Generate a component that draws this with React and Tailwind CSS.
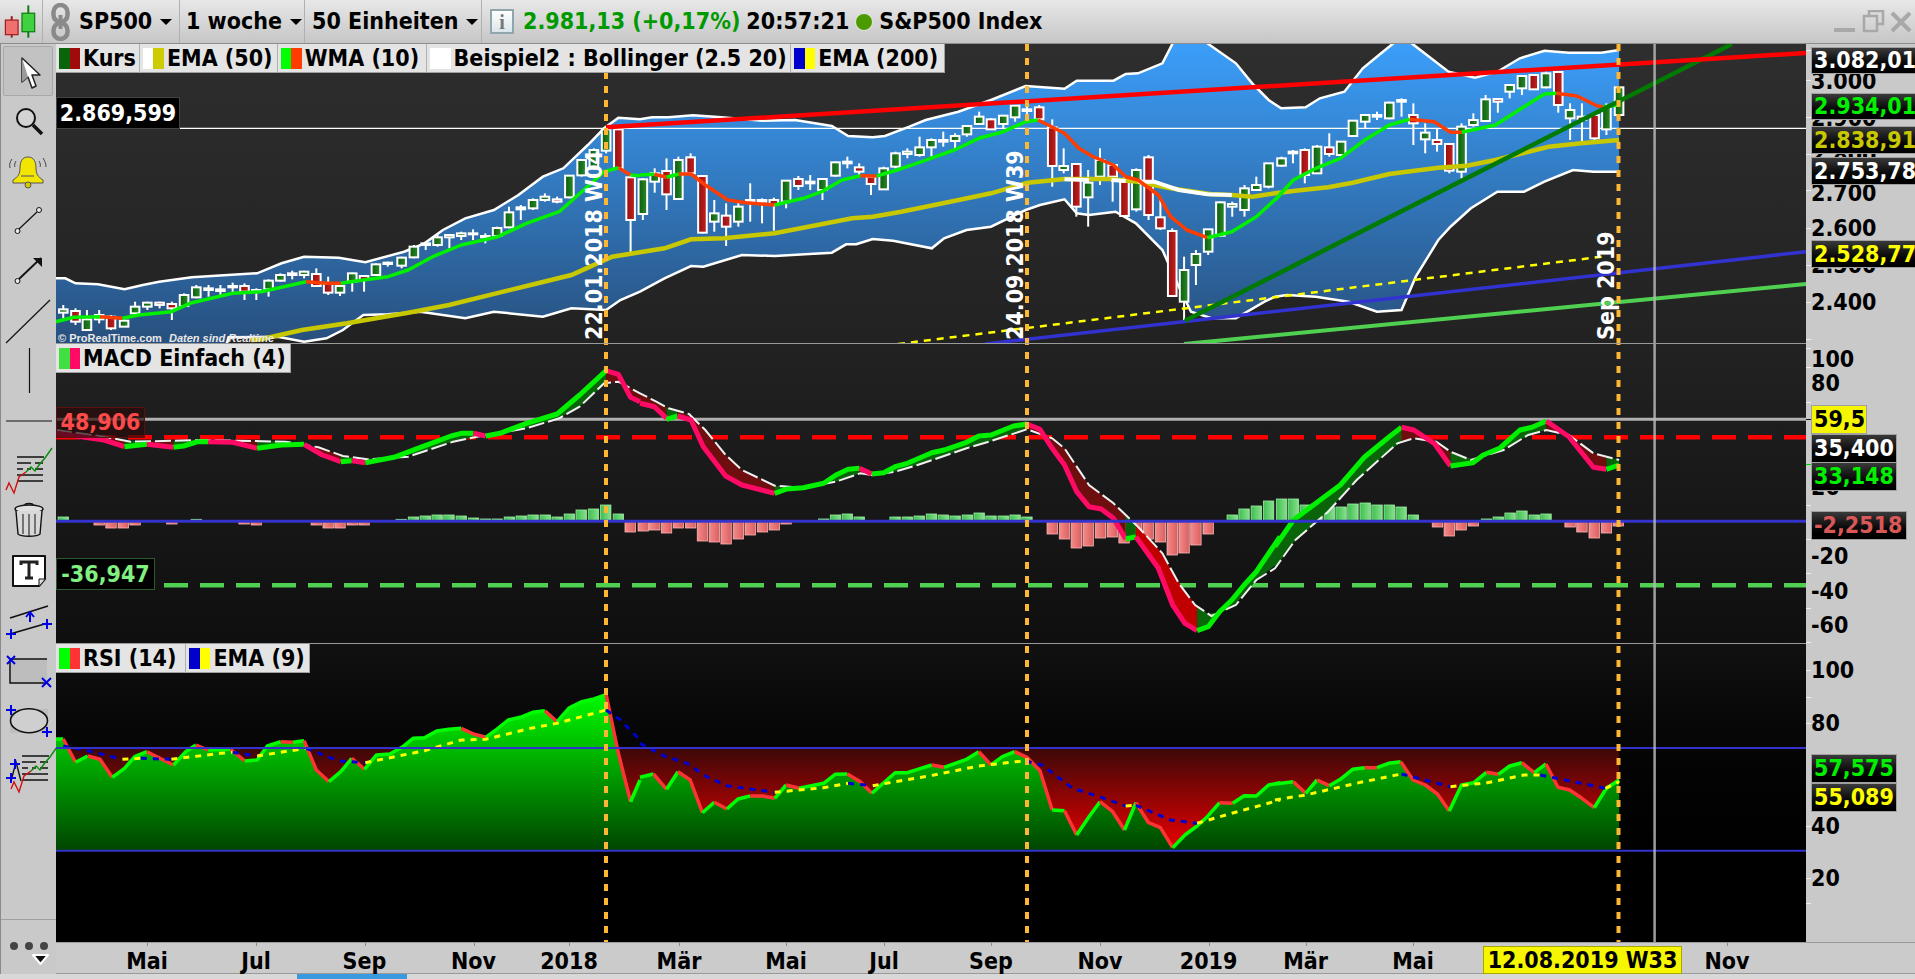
// Weekly S&P500 chart window: price panel, MACD panel, RSI panel, time axis.
// Chart data was read off zoom crops, so it is stored as crop coordinates and
// converted with Z(): crop x is scaled 2.45, crop y is scaled 3.

const Z = (x0, y0, a) => {
  const out = [];
  for (let i = 0; i < a.length; i += 2) out.push([x0 + a[i] / 2.45, y0 + a[i + 1] / 3]);
  return out;
};
const str = (pts) => pts.map((p) => p[0].toFixed(1) + "," + p[1].toFixed(1)).join(" ");

const X = [0, 640, 1275];

const upper = [
  ...Z(X[0], 0, [137,835,160,835,185,850,240,853,305,868,350,855,390,845,470,832,630,820,690,790,745,770,830,773,895,787,990,755,1040,730,1085,690,1140,655,1210,630,1270,585,1330,530,1380,505,1440,435,1480,385,1515,353]),
  ...Z(X[1], 0, [0,358,30,352,70,352,130,346,200,352,300,362,380,360,470,378,510,408,570,412,600,408,660,380,700,360,780,335,860,300,945,258,1040,266,1070,242,1160,242,1190,222,1220,220,1280,190,1305,130,1310,110,1385,110,1390,130,1460,190,1500,250,1540,300]),
  ...Z(X[2], 0, [15,325,75,322,110,295,170,275,215,205,260,160,290,130,300,110,325,110,335,130,425,215,490,233,545,215,600,175,660,152,720,158,800,158,843,150]),
];
const lower = [
  ...Z(X[0], 0, [137,1100,540,1100,560,1012,680,1010,745,1025,800,1015,840,990,890,945,950,943,1030,935,1140,955,1210,935,1330,950,1400,925,1485,930,1520,900]),
  ...Z(X[1], 0, [0,875,60,835,125,798,155,800,250,765,330,768,470,758,505,733,530,733,570,717,620,722,715,745,745,715,800,690,860,680,945,630,980,615,1040,598,1070,640,1100,645,1165,635,1215,670,1280,750,1320,860,1350,935,1400,955,1460,955,1530,905]),
  ...Z(X[2], 0, [0,890,30,885,100,890,180,905,250,935,310,930,345,830,400,720,430,680,480,625,545,575,610,575,660,545,730,510,780,515,843,515]),
];
const ema50 = [
  ...Z(X[0], 0, [615,1020,640,1018,740,990,850,970,1000,938,1100,915,1300,855,1400,825,1500,770]),
  ...Z(X[1], 0, [0,757,60,745,125,718,205,715,330,700,520,655,570,650,640,635,760,605,860,580,950,548,1040,537,1155,537,1220,545,1300,565,1400,583,1450,585,1500,590]),
  ...Z(X[2], 0, [0,580,50,572,130,562,190,548,280,522,400,503,470,497,540,480,670,440,750,430,843,420]),
];
const midBand = [
  Z(X[1], 0, [1040,538,1100,540]),
  Z(X[1], 0, [1155,540,1190,543]),
  Z(X[1], 0, [1220,545,1260,545,1320,570,1390,583,1450,585]),
];

const wma = [
  [0,"g",137,965,180,952,245,950],[0,"r",245,950,300,955],[0,"g",300,955,340,945,420,935,470,908,570,880,640,875,750,845],[0,"r",750,845,800,850,835,850],
  [0,"g",835,850,890,840,950,830,1000,810,1060,770,1130,735,1220,710,1290,670,1370,635,1430,570,1480,515,1515,503],[0,"r",1515,503,1545,525],[0,"g",1545,525,1568,527],
  [1,"g",0,525,35,523],[1,"r",35,523,65,532],[1,"g",65,532,95,522],[1,"r",95,522,125,522,160,555,215,600,260,608,330,615],
  [1,"g",330,615,400,595,445,575,495,540,540,527],[1,"r",540,527,580,528],[1,"g",580,528,630,510,690,485,770,450,830,415,890,395,945,365,975,360],
  [1,"r",975,360,1000,375,1040,400,1075,445,1110,470,1160,495,1190,530,1220,540,1270,585,1300,650,1340,690,1390,713],[1,"g",1390,713,1450,695,1510,650,1568,585],
  [2,"g",0,600,45,540,100,505,160,475,220,420,280,375,330,358],[2,"r",330,358,390,365,430,397,458,397],[2,"g",458,397,540,375,610,320,660,282,690,280],
  [2,"r",690,280,740,288,790,318,805,320],[2,"g",805,320,843,315],
];

// [x, wick top, wick bottom, body top, body bottom, colour]
const candles = [
  [0,155,915,960,928,938,"g"],[0,185,925,975,933,965,"r"],[0,213,930,990,958,990,"g"],[0,243,930,970,945,958,"g"],[0,272,945,990,950,985,"r"],[0,304,955,980,962,980,"g"],
  [0,331,905,945,920,940,"g"],[0,361,905,930,908,920,"g"],[0,391,905,925,908,915,"r"],[0,421,905,960,912,925,"r"],[0,451,880,920,885,918,"g"],[0,481,855,895,862,892,"g"],
  [0,511,855,890,865,870,"r"],[0,540,855,885,868,873,"g"],[0,570,848,880,858,862,"r"],[0,599,850,900,858,875,"r"],[0,628,865,900,870,875,"r"],[0,658,838,890,842,868,"g"],
  [0,687,820,845,825,842,"g"],[0,716,812,838,820,825,"g"],[0,745,812,835,815,825,"g"],[0,775,805,855,822,858,"r"],[0,804,830,885,850,878,"r"],[0,833,855,888,858,878,"g"],
  [0,863,818,875,820,845,"g"],[0,892,825,875,828,840,"r"],[0,921,790,825,793,825,"g"],[0,950,785,800,788,792,"g"],[0,984,770,805,773,797,"g"],[0,1014,735,775,740,772,"g"],
  [0,1043,725,750,730,735,"g"],[0,1072,705,740,712,735,"g"],[0,1101,703,745,705,712,"g"],[0,1130,695,720,700,708,"g"],[0,1159,688,720,700,703,"r"],[0,1189,700,730,708,712,"g"],
  [0,1218,680,710,684,708,"g"],[0,1247,620,685,637,682,"g"],[0,1276,615,660,622,628,"r"],[0,1306,595,630,600,625,"g"],[0,1335,580,605,590,600,"g"],[0,1365,590,610,598,605,"r"],
  [0,1395,525,595,527,592,"g"],[0,1425,478,530,480,526,"g"],[0,1455,445,510,450,500,"g"],[0,1485,385,460,388,452,"g"],[0,1515,385,510,388,505,"r"],[0,1545,525,760,532,660,"r"],
  [1,7,535,660,538,642,"g"],[1,36,505,578,520,545,"g"],[1,65,475,630,513,583,"r"],[1,94,470,600,480,597,"g"],[1,124,460,520,472,520,"r"],[1,153,525,700,528,698,"r"],
  [1,182,600,695,640,665,"g"],[1,211,610,738,647,680,"r"],[1,241,600,680,620,665,"g"],[1,270,550,665,600,605,"g"],[1,299,595,670,600,605,"r"],[1,328,593,692,600,615,"r"],
  [1,358,540,625,542,605,"g"],[1,388,528,570,537,558,"r"],[1,417,525,570,545,550,"r"],[1,447,535,600,537,570,"g"],[1,479,485,530,487,527,"g"],[1,508,470,505,485,490,"g"],
  [1,537,490,530,502,515,"r"],[1,566,525,585,530,552,"r"],[1,597,500,570,505,568,"g"],[1,626,455,505,460,500,"g"],[1,655,445,475,455,462,"g"],[1,685,410,470,442,465,"g"],
  [1,714,415,470,420,442,"g"],[1,743,395,440,420,425,"r"],[1,772,400,445,408,423,"g"],[1,801,375,410,378,403,"g"],[1,831,335,375,350,372,"g"],[1,860,355,390,358,388,"r"],
  [1,890,345,385,347,372,"g"],[1,919,315,365,317,352,"g"],[1,948,320,360,328,333,"r"],[1,978,315,362,322,358,"r"],[1,1010,358,560,382,498,"r"],[1,1038,445,520,498,510,"g"],
  [1,1069,490,650,492,620,"r"],[1,1098,510,680,548,592,"g"],[1,1127,445,555,480,530,"g"],[1,1158,490,605,495,530,"r"],[1,1187,525,650,545,648,"r"],[1,1216,505,635,510,628,"g"],
  [1,1246,465,660,472,645,"r"],[1,1275,600,690,652,685,"r"],[1,1304,685,890,693,888,"r"],[1,1333,770,960,810,905,"g"],[1,1362,750,855,762,795,"g"],[1,1392,688,765,688,755,"g"],
  [1,1422,605,710,607,707,"g"],[1,1451,605,650,612,620,"g"],[1,1481,555,650,565,630,"g"],[1,1510,530,570,555,570,"g"],[1,1540,490,565,490,560,"g"],
  [2,16,470,500,475,497,"g"],[2,44,450,490,455,460,"g"],[2,73,445,550,450,525,"r"],[2,103,435,520,440,520,"g"],[2,133,400,470,442,462,"r"],[2,162,425,470,425,465,"g"],
  [2,191,360,410,362,408,"g"],[2,221,342,385,345,365,"g"],[2,250,335,360,345,350,"g"],[2,280,305,358,308,355,"g"],[2,310,295,350,300,305,"g"],[2,339,310,435,345,370,"r"],
  [2,368,370,460,398,418,"g"],[2,397,385,455,420,432,"r"],[2,427,430,520,432,512,"r"],[2,457,370,535,380,515,"g"],[2,486,340,380,360,375,"g"],[2,516,285,365,298,363,"g"],
  [2,546,295,338,297,305,"r"],[2,575,252,295,255,275,"g"],[2,605,225,285,228,265,"g"],[2,634,225,268,225,268,"r"],[2,664,215,265,220,262,"g"],[2,694,215,338,216,315,"r"],
  [2,723,310,420,330,355,"g"],[2,752,310,425,350,360,"r"],[2,783,345,420,345,415,"r"],[2,812,310,405,322,388,"g"],[2,843,260,360,262,345,"g"],
];

const macd = [
  [0,"r",137,280,255,300,305,320],[0,"g",305,320,360,313],[0,"r",360,313,425,322],[0,"g",425,322,450,318,485,305,510,305],[0,"r",510,305,570,307,630,325],[0,"g",630,325,690,315,745,313],
  [0,"r",745,313,790,345,835,365],[0,"g",835,365,862,362],[0,"r",862,362,895,368],[0,"g",895,368,965,352,1030,322,1105,288,1130,280,1160,280],[0,"r",1160,280,1190,288],
  [0,"g",1190,288,1225,280,1290,250,1365,222,1420,165,1485,92],[0,"r",1485,92,1515,103,1545,172,1568,185],
  [1,"r",0,190,35,200,65,235],[1,"g",65,238,92,228],[1,"r",92,228,125,240,155,320,210,408,250,435,330,460],[1,"g",330,460,360,447,400,443,450,430,480,405,510,388,538,385],[1,"r",538,385,568,402],
  [1,"g",568,402,597,398,625,380,655,370,715,338,745,330,800,307,830,288,860,285,915,258,948,252],[1,"r",948,252,980,268,1010,325,1040,375,1070,455,1100,500,1130,507,1160,535,1190,597],
  [1,"g",1190,597,1215,590],[1,"r",1215,590,1270,685,1305,795,1335,850,1365,872],[1,"g",1365,872,1392,860,1420,815,1450,780,1480,735,1510,695,1568,590],
  [2,"g",0,620,45,540,100,490,160,435,220,350,280,290,310,262],[2,"r",310,262,340,270,390,310,430,378],[2,"g",430,378,485,368,510,345,550,325,600,270,630,262,665,243],
  [2,"r",665,243,720,290,780,382,812,388],[2,"g",812,388,843,375],
];
const signal = [
  ...Z(X[0], 340, [137,270,255,290,320,305,500,300,700,305,780,322,840,348,900,358,1000,350,1110,305,1190,285,1290,265,1370,235,1420,200,1480,130,1515,125]),
  ...Z(X[1], 340, [0,160,40,185,70,205,120,222,160,270,210,345,250,390,330,437,400,443,480,425,540,400,568,405,625,395,680,375,800,325,860,303,948,268,1010,295,1040,325,1100,435,1160,490,1220,560,1280,640,1320,730,1360,795,1400,828,1460,795,1510,720]),
  ...Z(X[2], 340, [0,685,50,600,130,515,200,420,300,310,340,295,395,305,430,335,480,360,560,330,620,285,665,270,720,285,780,340,843,360]),
];

// [crop, x, height in crop px, positive is up]
const bars = [
  [0,[155,12,243,-9,272,-18,302,-18,331,-9,421,-6,481,5,598,-6,628,-9,775,-9,804,-18,833,-18,863,-9,892,-9,983,5,1013,12,1042,15,1071,18,1100,18,1130,15,1160,9,1189,6,1218,6,1248,12,1277,15,1306,18,1336,18,1365,12,1395,21,1424,33,1454,36,1484,48,1515,21,1544,-30]],
  [1,[8,-27,36,-24,65,-33,94,-18,124,-18,153,-57,182,-60,211,-66,241,-51,270,-39,300,-30,329,-24,358,-6,450,6,479,18,508,21,537,12,625,12,655,12,684,15,714,21,743,18,772,15,802,18,831,24,860,15,890,15,919,18,948,12,1010,-36,1040,-51,1069,-78,1098,-72,1128,-48,1157,-45,1186,-63,1216,-36,1245,-51,1275,-60,1304,-99,1333,-93,1362,-69,1392,-36,1451,18,1480,36,1510,45,1540,60]],
  [2,[16,66,45,66,74,48,103,51,133,42,162,42,191,51,221,54,250,48,280,48,309,42,339,18,398,-15,427,-42,456,-24,486,-12,518,6,547,12,576,24,605,30,635,18,664,21,723,-15,752,-30,782,-48,812,-33,841,-12]],
];

const rsi = [
  [0,"g",137,237,155,237],[0,"r",155,237,185,307],[0,"g",185,307,215,288],[0,"r",215,288,245,298,275,352],[0,"g",275,352,305,325,330,290,360,275],[0,"r",360,275,425,315],[0,"g",425,315,455,275,480,255],
  [0,"r",480,255,510,270],[0,"g",510,270,565,268],[0,"r",565,268,600,303],[0,"g",600,303,630,300,655,258,688,245],[0,"r",688,245,718,247],[0,"g",718,247,745,242],[0,"r",745,242,775,330,806,365],
  [0,"g",806,365,835,335,862,295],[0,"r",862,295,893,328],[0,"g",893,328,922,285,955,282,985,262,1012,235,1040,233,1070,213,1100,208,1130,205],[0,"r",1130,205,1160,222,1190,232],
  [0,"g",1190,232,1215,210,1245,180,1275,172,1305,157,1335,152],[0,"r",1335,152,1365,185],[0,"g",1365,185,1395,143,1425,125,1455,117,1485,104],[0,"r",1485,104,1515,280,1545,425],[0,"g",1545,425,1568,360],
  [1,"g",0,352,33,342],[1,"r",33,342,65,388],[1,"g",65,388,93,335],[1,"r",93,335,123,360,153,458],[1,"g",153,458,182,427],[1,"r",182,427,213,447],[1,"g",213,447,240,417,270,408],[1,"r",270,408,300,408,330,415],
  [1,"g",330,415,358,375],[1,"r",358,375,390,385],[1,"g",390,385,450,370,478,343,508,342],[1,"r",508,342,540,365,568,400],[1,"g",568,400,625,338,655,338,715,315],[1,"r",715,315,745,322],[1,"g",745,322,800,298,830,275],
  [1,"r",830,275,860,315],[1,"g",860,315,888,290,918,275],[1,"r",918,275,948,292,980,332,1010,450],[1,"g",1010,450,1040,452],[1,"r",1040,452,1070,525],[1,"g",1070,525,1100,470,1127,425],[1,"r",1127,425,1158,455,1187,510],
  [1,"g",1187,510,1215,428],[1,"r",1215,428,1245,487,1275,503,1305,563],[1,"g",1305,563,1335,525,1365,498,1390,470,1420,428],[1,"r",1420,428,1452,430],[1,"g",1452,430,1480,407,1510,408,1540,375,1568,368],
  [2,"g",0,372,45,365],[2,"r",45,365,75,400],[2,"g",75,400,103,360],[2,"r",103,360,133,377],[2,"g",133,377,160,358,190,328,220,323],[2,"r",220,323,250,323],[2,"g",250,323,278,310,308,305],
  [2,"r",308,305,338,360,368,375,398,402,427,453],[2,"g",427,453,457,375,487,368,518,337],[2,"r",518,337,547,343],[2,"g",547,343,575,318,605,308],[2,"r",605,308,635,338],[2,"g",635,338,664,312],
  [2,"r",664,312,693,382,722,390,752,415,782,443],[2,"g",782,443,812,385,843,360],
];
const rsiEma = [
  [0,"b",155,258,215,272,300,298],[0,"y",300,298,345,295],[0,"b",345,295,420,298],[0,"y",420,298,540,280,570,277],[0,"b",570,277,630,288],[0,"y",630,288,750,265],[0,"b",750,265,830,303,895,308],
  [0,"y",895,308,1040,272,1130,240,1190,238,1300,205,1365,190,1485,150],[0,"b",1485,150,1520,180,1568,240],
  [1,"b",0,250,60,288,115,310,160,348,215,378,330,397],[1,"y",330,397,450,383,510,370],[1,"b",510,370,570,377],[1,"y",570,377,720,345,830,318,920,305,945,303],[1,"b",945,303,985,315,1060,385,1130,412,1190,438],
  [1,"y",1190,438,1215,436],[1,"b",1215,436,1300,480,1365,490],[1,"y",1365,490,1450,460,1568,420],
  [2,"y",0,420,75,405,210,367,310,342],[2,"b",310,342,430,380],[2,"y",430,380,520,368,610,345,650,345],[2,"b",650,345,810,385],[2,"y",810,385,843,365],
];

const toSegs = (list, y0) => list.map(([i, c, ...a]) => ({ c, pts: Z(X[i], y0, a) }));
const wmaSegs = toSegs(wma, 0);
const macdSegs = toSegs(macd, 340);
const rsiSegs = toSegs(rsi, 660);
const rsiEmaSegs = toSegs(rsiEma, 660);

// signal value at a given x, for the fill between the two MACD lines
const signalAt = (x) => {
  for (let i = 1; i < signal.length; i++) {
    if (x <= signal[i][0]) {
      const [x1, y1] = signal[i - 1];
      const [x2, y2] = signal[i];
      return y1 + ((y2 - y1) * (x - x1)) / (x2 - x1 || 1);
    }
  }
  return signal[signal.length - 1][1];
};

const ORANGE_X = [606, 1027, 1618.5];

function SharedLines() {
  return (
    <>
      {ORANGE_X.map((x) => (
        <line key={x} x1={x} x2={x} y1="44" y2="942" stroke="#ffb733" strokeWidth="4" strokeDasharray="7 7" />
      ))}
      <line x1="1654.6" x2="1654.6" y1="44" y2="942" stroke="#b8b8b8" strokeOpacity="0.85" strokeWidth="2.5" />
    </>
  );
}

function PricePanel() {
  const fill = str([...upper, ...[...lower].reverse()]);
  return (
    <svg viewBox="56 44 1750 300" className="block h-full w-full">
      <defs>
        <linearGradient id="blueFill" gradientUnits="userSpaceOnUse" x1="0" x2="0" y1="44" y2="340">
          <stop offset="0" stopColor="#3b9ef9" />
          <stop offset="1" stopColor="#28507e" />
        </linearGradient>
        <linearGradient id="candleR" x1="0" x2="1" y1="0" y2="0">
          <stop offset="0" stopColor="#8f1010" />
          <stop offset="1" stopColor="#c82020" />
        </linearGradient>
        <linearGradient id="candleG" x1="0" x2="1" y1="0" y2="0">
          <stop offset="0" stopColor="#0d5c0d" />
          <stop offset="1" stopColor="#2a8a2a" />
        </linearGradient>
      </defs>
      <polygon points={fill} fill="url(#blueFill)" />
      <polyline points={str(upper)} fill="none" stroke="#fff" strokeWidth="2.5" />
      <polyline points={str(lower)} fill="none" stroke="#fff" strokeWidth="2.5" />
      <line x1="180" x2="1806" y1="128.3" y2="128.3" stroke="#fff" strokeWidth="1.2" />
      {candles.map(([i, x, wt, wb, bt, bb, c]) => {
        const cx = X[i] + x / 2.45;
        return (
          <g key={i + "-" + x}>
            <line x1={cx} x2={cx} y1={wt / 3} y2={wb / 3} stroke="#fff" strokeWidth="2" />
            <rect x={cx - 4.3} y={bt / 3} width="8.6" height={Math.max((bb - bt) / 3, 1)} fill={c === "g" ? "url(#candleG)" : "url(#candleR)"} stroke="#fff" strokeWidth="2" />
          </g>
        );
      })}
      <polyline points={str(ema50)} fill="none" stroke="#c8c800" strokeWidth="4.5" />
      {midBand.map((p, i) => (
        <polyline key={i} points={str(p)} fill="none" stroke="#fff" strokeWidth="4" />
      ))}
      {wmaSegs.map((s, i) => (
        <polyline key={i} points={str(s.pts)} fill="none" stroke={s.c === "g" ? "#00f000" : "#ff3d00"} strokeWidth="3.5" strokeLinejoin="round" />
      ))}
      <line x1="898" y1="344" x2="1601.5" y2="256.7" stroke="#ffff00" strokeWidth="2.5" strokeDasharray="7 6" />
      <line x1="985" y1="344" x2="1806" y2="251.7" stroke="#3232d0" strokeWidth="3.5" />
      <line x1="1184" y1="344" x2="1806" y2="284" stroke="#50d050" strokeWidth="4" />
      <line x1="1185" y1="320.7" x2="1732" y2="44" stroke="#007a00" strokeWidth="4.5" />
      <line x1="606" y1="127.3" x2="1806" y2="53" stroke="#ff0000" strokeWidth="4.5" />
      <SharedLines />
      <g fill="#fff" fontSize="23" fontWeight="700" fontFamily="'DejaVu Sans Condensed','DejaVu Sans',sans-serif">
        <text transform="translate(602 340) rotate(-90)">22.01.2018 W04</text>
        <text transform="translate(1023 340) rotate(-90)">24.09.2018 W39</text>
        <text transform="translate(1614 340) rotate(-90)">Sep 2019</text>
      </g>
      <text x="58" y="342" fill="#e8e8e8" fontSize="11" fontFamily="'Liberation Sans',sans-serif">
        © ProRealTime.com <tspan dx="4" fontStyle="italic">Daten sind Realtime</tspan>
      </text>
      <line x1="56" x2="1806" y1="343.5" y2="343.5" stroke="#9a9a9a" strokeWidth="1" />
    </svg>
  );
}

function MacdPanel() {
  return (
    <svg viewBox="56 344 1750 300" className="block h-full w-full">
      <defs>
        <linearGradient id="barG" x1="0" x2="1" y1="0" y2="0">
          <stop offset="0" stopColor="#3fbe50" />
          <stop offset="1" stopColor="#86e08c" />
        </linearGradient>
        <linearGradient id="barR" x1="0" x2="1" y1="0" y2="0">
          <stop offset="0" stopColor="#f58a8a" />
          <stop offset="1" stopColor="#d96060" />
        </linearGradient>
      </defs>
      {bars.map(([i, a]) => {
        const out = [];
        for (let k = 0; k < a.length; k += 2) {
          const x = X[i] + a[k] / 2.45;
          const h = Math.abs(a[k + 1]) / 3;
          const up = a[k + 1] > 0;
          out.push(
            <rect key={i + "-" + k} x={x - 5.2} width="10.4" y={up ? 521 - h : 522} height={h} fill={up ? "url(#barG)" : "url(#barR)"} stroke={up ? "#9cf0a4" : "#ffb4b4"} strokeWidth="0.8" />
          );
        }
        return out;
      })}
      <line x1="56" x2="1806" y1="419.3" y2="419.3" stroke="#b0b0b0" strokeWidth="3" />
      <line x1="56" x2="1806" y1="437.3" y2="437.3" stroke="#ff0000" strokeWidth="4.5" strokeDasharray="24 12" />
      <line x1="56" x2="1806" y1="585.3" y2="585.3" stroke="#50d050" strokeWidth="4.5" strokeDasharray="24 12" />
      {macdSegs.map((s, i) => {
        const back = [...s.pts].reverse().map((p) => [p[0], signalAt(p[0])]);
        const deep = s.pts.some((p) => p[1] > 600);
        return (
          <polygon key={i} points={str([...s.pts, ...back])} fill={s.c === "g" ? "#0a640a" : deep ? "#c00000" : "#6e0e0e"} />
        );
      })}
      <polyline points={str(signal)} fill="none" stroke="#f0f0f0" strokeWidth="2" strokeDasharray="16 4" />
      {macdSegs.map((s, i) => (
        <polyline key={i} points={str(s.pts)} fill="none" stroke={s.c === "g" ? "#00f000" : "#ff0a64"} strokeWidth="5" strokeLinejoin="round" />
      ))}
      <line x1="56" x2="1806" y1="521.3" y2="521.3" stroke="#3333cc" strokeWidth="3" />
      <SharedLines />
      <line x1="56" x2="1806" y1="643.5" y2="643.5" stroke="#9a9a9a" strokeWidth="1" />
    </svg>
  );
}

function RsiPanel() {
  const pts = rsiSegs.flatMap((s) => s.pts);
  const last = pts[pts.length - 1];
  const area = [[56, 850.7], ...pts, [last[0], 850.7]];
  return (
    <svg viewBox="56 644 1750 298" className="block h-full w-full">
      <defs>
        <linearGradient id="rsiRed" gradientUnits="userSpaceOnUse" x1="0" x2="0" y1="748" y2="851">
          <stop offset="0" stopColor="#3c0808" />
          <stop offset="1" stopColor="#ee0000" />
        </linearGradient>
        <linearGradient id="rsiGreen" gradientUnits="userSpaceOnUse" x1="0" x2="0" y1="690" y2="851">
          <stop offset="0" stopColor="#00ff00" />
          <stop offset="1" stopColor="#004400" />
        </linearGradient>
      </defs>
      <rect x="56" y="748" width={last[0] - 56} height="102.7" fill="url(#rsiRed)" />
      <polygon points={str(area)} fill="url(#rsiGreen)" />
      {rsiSegs.map((s, i) => (
        <polyline key={i} points={str(s.pts)} fill="none" stroke={s.c === "g" ? "#00ff00" : "#ff3333"} strokeWidth="3.5" strokeLinejoin="round" />
      ))}
      {rsiEmaSegs.map((s, i) => (
        <polyline key={i} points={str(s.pts)} fill="none" stroke={s.c === "y" ? "#ffff00" : "#0000d0"} strokeWidth="3" strokeDasharray="6 6" />
      ))}
      <line x1="56" x2="1806" y1="748" y2="748" stroke="#3333cc" strokeWidth="2" />
      <line x1="56" x2="1806" y1="850.7" y2="850.7" stroke="#3333cc" strokeWidth="2" />
      <SharedLines />
    </svg>
  );
}

// Two-colour square in front of each legend entry.
function Swatch({ a, b }) {
  return (
    <span className="flex h-[21px] w-[21px] shrink-0">
      <span className="h-full w-1/2" style={{ background: a }} />
      <span className="h-full w-1/2" style={{ background: b }} />
    </span>
  );
}

function LegendItem({ a, b, w, children, last }) {
  return (
    <div className={`flex h-[29px] items-center gap-[3px] pl-[3px] ${last ? "" : "border-r border-[#b0b0b0]"}`} style={{ width: w }}>
      <Swatch a={a} b={b} />
      <span className="whitespace-nowrap">{children}</span>
    </div>
  );
}

function Tick({ y, top, color = "#f0f0f0" }) {
  return <div className="absolute left-0 h-px w-[5px]" style={{ top: y - top, background: color }} />;
}

function AxisNum({ y, top, children }) {
  return (
    <div className="absolute left-[5px] -translate-y-1/2 leading-none" style={{ top: y - top }}>
      {children}
    </div>
  );
}

function ValueBox({ y, h, w, top, color, yellow, children }) {
  return (
    <div
      className={`absolute left-[5px] flex items-center overflow-hidden border border-[#a0a0a0] pl-[2px] leading-none ${yellow ? "bg-[#f6f600]" : "bg-gradient-to-b from-[#3a3a3a] to-black"}`}
      style={{ top: y - top, height: h, width: w, color }}
    >
      {children}
    </div>
  );
}

function Tool({ y, h, children }) {
  return (
    <svg width="56" height={h} viewBox={`0 ${y} 56 ${h}`} className="block shrink-0">
      {children}
    </svg>
  );
}

const Plus = ({ x, y }) => <path d={`M${x - 5} ${y}H${x + 5}M${x} ${y - 5}V${y + 5}`} stroke="#0000e0" strokeWidth="2" fill="none" />;

function MiniChart({ ox = 0, oy = 0 }) {
  return (
    <g transform={`translate(${ox} ${oy})`} fill="none">
      <path d="M16 457H43M16 463H30M34 463H42M16 469H22M26 469H30M34 469H42M16 475H42M16 481H42" stroke="#111" strokeWidth="1.6" strokeDasharray="none" />
      <path d="M5 490L8 483L13 493L18 477L25 472" stroke="#d01010" strokeWidth="1.4" />
      <path d="M25 472L30 467L34 471L38 465L44 458L51 448" stroke="#0a8a0a" strokeWidth="1.4" />
    </g>
  );
}

function Toolbar() {
  return (
    <div className="flex h-full w-[56px] shrink-0 flex-col border-l border-[#8a8a8a] bg-[#c9c9c9]">
      <div className="mx-[2px] mt-[2px] h-[50px] w-[50px] rounded-[2px] border border-[#a8a8a8] bg-[#c2c2c2]">
        <svg width="48" height="48" viewBox="0 0 48 48" className="block">
          <path d="M18 11L18 35L24 30L28 41L32 39L28 28L36 28Z" fill="#fff" stroke="#222" strokeWidth="1.5" strokeLinejoin="round" />
          <path d="M18 11L18 35L24 30Z" fill="#9a9a9a" />
        </svg>
      </div>
      <Tool y={96} h={50}>
        <circle cx="25" cy="118" r="9" fill="#d4d4d4" stroke="#111" strokeWidth="2" />
        <path d="M32 125L41 134" stroke="#111" strokeWidth="3.5" />
      </Tool>
      <Tool y={146} h={52}>
        <path d="M27 157c-6 0-8 5-8 11c0 6-2 9-7 12v3h30v-3c-5-3-7-6-7-12c0-6-2-11-8-11z" fill="#f2e600" stroke="#555" strokeWidth="1" />
        <circle cx="27" cy="185" r="3" fill="#d8c800" stroke="#555" strokeWidth="1" />
        <path d="M20 176H33" stroke="#666" strokeWidth="1.2" />
        <path d="M11 159c-2 3-3 5-2 9M15 161c-1 2-2 4-1 6M42 158c2 3 3 6 3 9M38 161c1 2 2 4 1 6" stroke="#444" fill="none" strokeWidth="1" />
      </Tool>
      <Tool y={198} h={47}>
        <path d="M18 229L36 212" stroke="#111" strokeWidth="1.2" />
        <circle cx="16.5" cy="231" r="2.5" fill="#e8e8e8" stroke="#111" />
        <circle cx="38" cy="210" r="2.5" fill="#e8e8e8" stroke="#111" />
      </Tool>
      <Tool y={245} h={50}>
        <path d="M18 279L40 258" stroke="#111" strokeWidth="1.8" />
        <path d="M32 258H41V267Z" fill="#111" />
        <circle cx="16.5" cy="281" r="2.5" fill="#e8e8e8" stroke="#111" />
      </Tool>
      <Tool y={295} h={50}>
        <path d="M5 343L49 300" stroke="#111" strokeWidth="1.2" />
      </Tool>
      <Tool y={345} h={52}>
        <path d="M28.5 348V393" stroke="#111" strokeWidth="1.2" />
      </Tool>
      <Tool y={397} h={48}>
        <path d="M5 421H51" stroke="#111" strokeWidth="1.2" />
      </Tool>
      <Tool y={445} h={52}>
        <MiniChart />
      </Tool>
      <Tool y={497} h={48}>
        <ellipse cx="28" cy="509" rx="14" ry="4" fill="#e0e0e0" stroke="#111" strokeWidth="1.4" />
        <path d="M24 505c0-2 8-2 8 0" fill="none" stroke="#111" strokeWidth="1.4" />
        <path d="M15 511L17 534c3 3 19 3 22 0L41 511" fill="#d8d8d8" stroke="#111" strokeWidth="1.4" />
        <path d="M22 514V534M28 514V536M34 514V534" stroke="#333" strokeWidth="1.2" />
      </Tool>
      <Tool y={545} h={52}>
        <path d="M12 556H44V579L38 586H12Z" fill="#fff" stroke="#111" strokeWidth="2" strokeLinejoin="round" />
        <path d="M38 586V579H44" fill="#ddd" stroke="#111" />
        <path d="M20 565V562H36V565M28 562V578M24 578H32" fill="none" stroke="#222" strokeWidth="3" />
      </Tool>
      <Tool y={597} h={55}>
        <path d="M9 618L47 606M9 634L47 623" stroke="#111" strokeWidth="1.8" />
        <path d="M29 622V613M25 617L29 612L33 617" stroke="#0000e0" strokeWidth="2" fill="none" />
        <Plus x={10} y={634} />
        <Plus x={46} y={624} />
      </Tool>
      <Tool y={652} h={40}>
        <rect x="10" y="660" width="36" height="23" fill="#bdbdbd" stroke="none" />
        <path d="M9 660V683H46M9 659H46" stroke="#111" strokeWidth="1.5" fill="none" />
        <path d="M6 656L14 664M14 656L6 664M41 678L50 687M50 678L41 687" stroke="#0000e0" strokeWidth="2" />
      </Tool>
      <Tool y={692} h={53}>
        <rect x="9" y="709" width="38" height="24" fill="#bdbdbd" />
        <ellipse cx="28" cy="720.7" rx="18.5" ry="12" fill="#cfcfcf" stroke="#111" strokeWidth="1.6" />
        <Plus x={10} y={710} />
        <Plus x={46} y={732} />
      </Tool>
      <Tool y={745} h={50}>
        <g transform="translate(5 299)">
          <MiniChart />
        </g>
        <path d="M10 781L15 762L20 781" stroke="#111" strokeWidth="1.4" fill="none" />
        <Plus x={14} y={764} />
        <Plus x={10} y={778} />
      </Tool>
      <div className="mt-[124px] border-t border-[#a0a0a0]" />
      <div className="flex flex-col items-end">
        <div className="mt-[22px] flex w-full justify-center gap-[7px]">
          <span className="h-[8px] w-[8px] rounded-full bg-[#444]" />
          <span className="h-[8px] w-[8px] rounded-full bg-[#444]" />
          <span className="h-[8px] w-[8px] rounded-full bg-[#444]" />
        </div>
        <svg width="18" height="12" viewBox="0 0 18 12" className="mr-[6px] mt-[4px]">
          <path d="M1 1H16L8.5 10Z" fill="#111" stroke="#fff" strokeWidth="2" strokeLinejoin="round" />
        </svg>
      </div>
    </div>
  );
}

function Caret() {
  return <span className="ml-[8px] h-0 w-0 border-x-[6px] border-t-[6px] border-x-transparent border-t-black" />;
}

function Header() {
  return (
    <div className="flex h-[44px] shrink-0 items-center border-b border-[#8c8c8c] bg-gradient-to-b from-[#e8e8e8] to-[#c6c6c6]">
      <div className="flex h-full w-[43px] shrink-0 items-center justify-center border-r border-[#b0b0b0]">
        <svg width="43" height="36" viewBox="0 0 43 36">
          <path d="M12 12V34" stroke="#a01818" strokeWidth="2" />
          <rect x="5.5" y="16" width="13" height="15" fill="#f07070" stroke="#a01818" strokeWidth="1.2" />
          <path d="M29 1V34" stroke="#0a7a0a" strokeWidth="2" />
          <rect x="22.5" y="9" width="13" height="19" fill="#40d040" stroke="#0a7a0a" strokeWidth="1.2" />
        </svg>
      </div>
      <div className="flex h-full w-[137px] shrink-0 items-center border-r border-[#b0b0b0] pl-[8px]">
        <svg width="20" height="38" viewBox="0 0 20 38" className="mr-[8px] shrink-0">
          <rect x="2.5" y="2" width="14" height="17" rx="7" fill="none" stroke="#8a8a8a" strokeWidth="4.5" />
          <rect x="2.5" y="20" width="14" height="16" rx="7" fill="none" stroke="#8a8a8a" strokeWidth="4.5" />
          <path d="M9.5 12V26" stroke="#8a8a8a" strokeWidth="4" />
        </svg>
        <span>SP500</span>
        <Caret />
      </div>
      <div className="flex h-full w-[125px] shrink-0 items-center border-r border-[#b0b0b0] pl-[6px]">
        <span className="whitespace-nowrap">1 woche</span>
        <Caret />
      </div>
      <div className="flex h-full w-[177px] shrink-0 items-center border-r border-[#b0b0b0] pl-[7px]">
        <span className="whitespace-nowrap">50 Einheiten</span>
        <Caret />
      </div>
      <div className="ml-[8px] flex h-[25px] w-[24px] shrink-0 items-center justify-center border-2 border-[#8fa6ad] bg-gradient-to-b from-white to-[#dbe6ea] font-['Liberation_Serif',serif] text-[20px] text-[#777]">
        i
      </div>
      <span className="ml-[9px] whitespace-nowrap text-[#009a00]">2.981,13 (+0,17%)</span>
      <span className="ml-[6px] whitespace-nowrap">20:57:21</span>
      <span className="ml-[6px] h-[18px] w-[18px] shrink-0 rounded-full border border-[#e6e6e6] bg-[#4a9a00]" />
      <span className="ml-[6px] whitespace-nowrap">S&amp;P500 Index</span>
      <div className="ml-auto mr-[3px] flex items-center gap-[7px]">
        <svg width="78" height="24" viewBox="0 0 78 24" fill="none" stroke="#a8a8a8">
          <path d="M0 20H21" strokeWidth="4" />
          <rect x="30" y="6" width="13" height="15" strokeWidth="2.5" />
          <path d="M35 6V1H49V14H43" strokeWidth="2.5" />
          <path d="M58 3L76 21M76 3L58 21" strokeWidth="4" />
        </svg>
      </div>
    </div>
  );
}

const timeLabels = [
  ["Mai", 147], ["Jul", 256], ["Sep", 364.5], ["Nov", 473.5], ["2018", 569], ["Mär", 679], ["Mai", 786], ["Jul", 884],
  ["Sep", 991], ["Nov", 1100], ["2019", 1208.6], ["Mär", 1305.6], ["Mai", 1413], ["Nov", 1727],
];

export default function App() {
  return (
    <div className="flex h-[979px] w-[1915px] flex-col overflow-hidden bg-[#c9c9c9] font-bold text-[23px] leading-none text-black [font-family:'DejaVu_Sans_Condensed','DejaVu_Sans',sans-serif]">
      <Header />
      <div className="flex h-[930px] shrink-0">
        <Toolbar />
        <div className="flex min-w-0 flex-1 flex-col">
          <div className="relative flex h-[300px] shrink-0">
            <div className="relative w-[1750px] shrink-0 bg-gradient-to-b from-[#2e2e2e] to-[#222222]">
              <PricePanel />
              <div className="absolute left-0 top-0 flex h-[29px] w-[889px] border-b border-r border-[#a0a0a0] bg-[#e4e4e4]">
                <LegendItem a="#0a640a" b="#a00a0a" w={84}>Kurs</LegendItem>
                <LegendItem a="#ffffff" b="#cccc00" w={138}>EMA (50)</LegendItem>
                <LegendItem a="#00ff00" b="#ff3d00" w={149}>WMA (10)</LegendItem>
                <LegendItem a="#ffffff" b="#ffffff" w={365}>Beispiel2 : Bollinger (2.5 20)</LegendItem>
                <LegendItem a="#0000cc" b="#ffff00" w={153} last>EMA (200)</LegendItem>
              </div>
              <div className="absolute left-0 top-[53px] flex h-[32px] w-[124px] items-center justify-center border border-[#444] bg-black text-white">2.869,599</div>
            </div>
            <div className="relative flex-1">
              {[50, 80, 117, 154, 190, 228, 265, 302, 339].map((y) => <Tick key={y} y={y} top={44} />)}
              <AxisNum y={81} top={44}>3.000</AxisNum>
              <AxisNum y={118} top={44}>2.900</AxisNum>
              <AxisNum y={155} top={44}>2.800</AxisNum>
              <AxisNum y={193} top={44}>2.700</AxisNum>
              <AxisNum y={228} top={44}>2.600</AxisNum>
              <AxisNum y={265} top={44}>2.500</AxisNum>
              <AxisNum y={302} top={44}>2.400</AxisNum>
              <ValueBox y={47} h={27} w={110} top={44} color="#fff">3.082,01</ValueBox>
              <ValueBox y={93} h={27} w={110} top={44} color="#00f000">2.934,01</ValueBox>
              <ValueBox y={126} h={28} w={110} top={44} color="#c8c800">2.838,91</ValueBox>
              <ValueBox y={157} h={28} w={110} top={44} color="#fff">2.753,78</ValueBox>
              <ValueBox y={240} h={28} w={110} top={44} color="#ffff00">2.528,77</ValueBox>
            </div>
          </div>
          <div className="relative flex h-[300px] shrink-0">
            <div className="relative w-[1750px] shrink-0 bg-gradient-to-b from-[#222222] to-[#0f0f0f]">
              <MacdPanel />
              <div className="absolute left-0 top-0 flex h-[29px] w-[235px] border-b border-r border-[#a0a0a0] bg-[#e4e4e4]">
                <LegendItem a="#40e040" b="#ff0a64" w={235} last>MACD Einfach (4)</LegendItem>
              </div>
              <div className="absolute left-0 top-[63px] flex h-[31px] w-[89px] items-center justify-center border border-[#5a1010] bg-[#2a0a0a]/70 text-[#ff4a4a]">48,906</div>
              <div className="absolute left-0 top-[214px] flex h-[32px] w-[99px] items-center justify-center border border-[#2a5a2a] bg-black text-[#80f080]">-36,947</div>
            </div>
            <div className="relative flex-1">
              {[348, 367, 402, 505, 539, 573, 608, 642].map((y) => <Tick key={y} y={y} top={344} />)}
              <Tick y={419} top={344} color="#111" />
              <Tick y={464} top={344} color="#00d000" />
              <AxisNum y={359} top={344}>100</AxisNum>
              <AxisNum y={383} top={344}>80</AxisNum>
              <AxisNum y={487} top={344}>20</AxisNum>
              <AxisNum y={556} top={344}>-20</AxisNum>
              <AxisNum y={591} top={344}>-40</AxisNum>
              <AxisNum y={625} top={344}>-60</AxisNum>
              <ValueBox y={405} h={29} w={56} top={344} color="#000" yellow>59,5</ValueBox>
              <ValueBox y={434} h={29} w={86} top={344} color="#fff">35,400</ValueBox>
              <ValueBox y={462} h={29} w={86} top={344} color="#00f000">33,148</ValueBox>
              <ValueBox y={511} h={29} w={96} top={344} color="#d85858">-2,2518</ValueBox>
            </div>
          </div>
          <div className="relative flex h-[298px] shrink-0">
            <div className="relative w-[1750px] shrink-0 bg-gradient-to-b from-[#111111] to-black">
              <RsiPanel />
              <div className="absolute left-0 top-0 flex h-[29px] w-[254px] border-b border-r border-[#a0a0a0] bg-[#e4e4e4]">
                <LegendItem a="#00ff00" b="#ff3333" w={131}>RSI (14)</LegendItem>
                <LegendItem a="#0000cc" b="#ffff00" w={123} last>EMA (9)</LegendItem>
              </div>
            </div>
            <div className="relative flex-1">
              {[670, 697, 723, 826, 878, 903].map((y) => <Tick key={y} y={y} top={644} />)}
              <AxisNum y={670} top={644}>100</AxisNum>
              <AxisNum y={723} top={644}>80</AxisNum>
              <AxisNum y={826} top={644}>40</AxisNum>
              <AxisNum y={878} top={644}>20</AxisNum>
              <ValueBox y={754} h={29} w={86} top={644} color="#00f000">57,575</ValueBox>
              <ValueBox y={783} h={29} w={86} top={644} color="#ffff00">55,089</ValueBox>
            </div>
          </div>
          <div className="relative h-[32px] shrink-0 border-y border-[#9a9a9a] bg-[#cbcbcb]">
            {timeLabels.map(([t, x], i) => (
              <div key={i}>
                <div className="absolute top-0 h-[3px] w-px bg-[#8a8a8a]" style={{ left: x - 56 }} />
                <span className="absolute top-[7px] -translate-x-1/2" style={{ left: x - 56 }}>{t}</span>
              </div>
            ))}
            <div className="absolute left-[1427px] top-[3px] flex h-[28px] w-[199px] items-center justify-center border border-[#a8a800] bg-[#f6f600]">12.08.2019 W33</div>
          </div>
        </div>
      </div>
      <div className="relative flex h-[5px] shrink-0 bg-[#d8d8d8]">
        <div className="w-[297px]" />
        <div className="h-full w-[110px] bg-[#3a9ae0]" />
      </div>
    </div>
  );
}
